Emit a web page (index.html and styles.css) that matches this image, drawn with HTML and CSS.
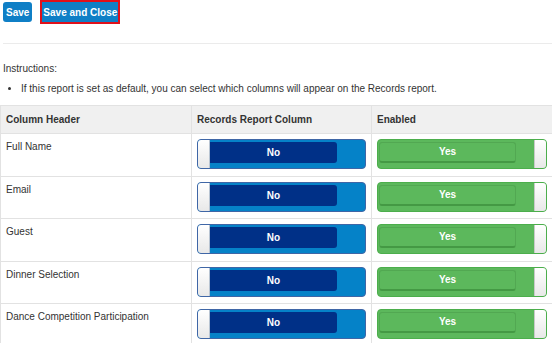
FILE: index.html
```html
<!DOCTYPE html>
<html lang="en">
<head>
    <meta charset="UTF-8">
    <meta name="viewport" content="width=device-width, initial-scale=1.0">
    <title>Records Report Columns</title>
    <link rel="stylesheet" href="styles.css">
</head>
<body>
    <div class="toolbar">
        <button class="btn">Save</button>
        <button class="btn btn-focus">Save and Close</button>
    </div>
    <div class="divider"></div>

    <p class="instructions">Instructions:</p>
    <ul class="notes">
        <li>If this report is set as default, you can select which columns will appear on the Records report.</li>
    </ul>

    <table class="columns">
        <colgroup>
            <col class="col-name">
            <col class="col-report">
            <col class="col-enabled">
        </colgroup>
        <thead>
            <tr>
                <th>Column Header</th>
                <th>Records Report Column</th>
                <th>Enabled</th>
            </tr>
        </thead>
        <tbody>
            <tr>
                <td class="name">Full Name</td>
                <td><div class="switch switch-off"><span class="handle"></span><span class="label">No</span></div></td>
                <td><div class="switch switch-on"><span class="label">Yes</span><span class="handle"></span></div></td>
            </tr>
            <tr>
                <td class="name">Email</td>
                <td><div class="switch switch-off"><span class="handle"></span><span class="label">No</span></div></td>
                <td><div class="switch switch-on"><span class="label">Yes</span><span class="handle"></span></div></td>
            </tr>
            <tr>
                <td class="name">Guest</td>
                <td><div class="switch switch-off"><span class="handle"></span><span class="label">No</span></div></td>
                <td><div class="switch switch-on"><span class="label">Yes</span><span class="handle"></span></div></td>
            </tr>
            <tr>
                <td class="name">Dinner Selection</td>
                <td><div class="switch switch-off"><span class="handle"></span><span class="label">No</span></div></td>
                <td><div class="switch switch-on"><span class="label">Yes</span><span class="handle"></span></div></td>
            </tr>
            <tr>
                <td class="name">Dance Competition Participation</td>
                <td><div class="switch switch-off"><span class="handle"></span><span class="label">No</span></div></td>
                <td><div class="switch switch-on"><span class="label">Yes</span><span class="handle"></span></div></td>
            </tr>
        </tbody>
    </table>
</body>
</html>
```

FILE: styles.css
```css
body {
    margin: 0;
    font-family: "Liberation Sans", Arial, sans-serif;
    font-size: 10px;
    line-height: 12px;
    color: #333;
    overflow: hidden;
}
.toolbar {
    display: flex;
    align-items: center;
    gap: 10px;
    padding: 2px 3px 0;
}
.btn {
    height: 20px;
    padding: 0 3px;
    border: none;
    border-radius: 3px;
    background: #0f7fc6;
    color: #fff;
    font-family: inherit;
    font-size: 10px;
    font-weight: bold;
}
.btn-focus {
    padding: 0 1px;
    border-radius: 0;
    outline: 2px solid #e0101a;
}
.divider {
    margin: 21px 0 0 3px;
    border-top: 1px solid #ebebeb;
}
.instructions {
    margin: 19px 0 0 3px;
}
.notes {
    margin: 8px 0 0;
    padding-left: 21px;
}
.columns {
    width: 552px;
    margin-top: 10px;
    border-collapse: collapse;
    table-layout: fixed;
}
.col-name { width: 191px; }
.col-report { width: 180px; }
.col-enabled { width: 181px; }
.columns th,
.columns td {
    border: 1px solid #e2e2e2;
    text-align: left;
    vertical-align: top;
}
.columns th {
    height: 27px;
    padding: 0 5px;
    background: #f0f0f0;
    vertical-align: middle;
    font-weight: bold;
}
.columns td {
    padding: 5px 5px 6.5px;
}
.columns td.name {
    padding-top: 7px;
}
.switch {
    display: flex;
    height: 30px;
    box-sizing: border-box;
    border: 1px solid;
    border-radius: 4px;
    overflow: hidden;
}
.switch .handle {
    width: 11px;
    background: linear-gradient(#fff, #e8e8e8);
}
.switch .label {
    height: 21px;
    margin-top: 2px;
    box-sizing: border-box;
    color: #fff;
    font-weight: bold;
    line-height: 21px;
    text-align: center;
}
.switch-off {
    border-color: #3f66a6;
    background: #0582c8;
}
.switch-off .handle {
    border-right: 1px solid #b8c4d2;
}
.switch-off .label {
    width: 127px;
    background: #003087;
    border-radius: 0 3px 3px 0;
}
.switch-on {
    justify-content: space-between;
    border-color: #4cae4c;
    background: #5cb85c;
}
.switch-on .handle {
    border-left: 1px solid #c9c9c9;
}
.switch-on .label {
    width: 137px;
    margin-left: 1px;
    border: 1px solid #52a852;
    border-bottom: 2px solid #449944;
    border-radius: 3px;
    background: #5cb85c;
    line-height: 18px;
}
```
